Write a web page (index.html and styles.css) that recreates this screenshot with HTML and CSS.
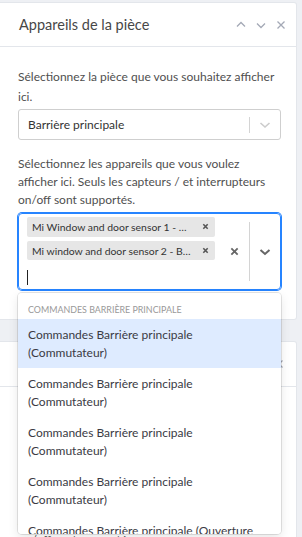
FILE: index.html
```html
<!DOCTYPE html>
<html lang="fr">
<head>
<meta charset="utf-8">
<title>Appareils de la pièce</title>
<link rel="stylesheet" href="styles.css">
</head>
<body>
<div class="page">
  <section class="card card-first">
    <header class="card-head">
      <h2 class="card-title">Appareils de la pièce</h2>
      <div class="tools">
        <svg class="tool" viewBox="0 0 10 10"><polyline points="1,6.5 5,2.5 9,6.5"/></svg>
        <svg class="tool" viewBox="0 0 10 10"><polyline points="1,3.5 5,7.5 9,3.5"/></svg>
        <svg class="tool" viewBox="0 0 10 10"><path d="M1.5 1.5 L8.5 8.5 M8.5 1.5 L1.5 8.5"/></svg>
      </div>
    </header>
    <div class="card-body">
      <p class="hint">Sélectionnez la pièce que vous souhaitez afficher ici.</p>
      <div class="select">
        <span class="select-value">Barrière principale</span>
        <span class="sep"></span>
        <span class="ind"><svg class="chev light" viewBox="0 0 12 8"><polyline points="1.5,2 6,6 10.5,2"/></svg></span>
      </div>
      <p class="hint hint-tight">Sélectionnez les appareils que vous voulez afficher ici. Seuls les capteurs / et interrupteurs on/off sont supportés.</p>
      <div class="multi">
        <div class="values">
          <div class="chip"><span class="chip-label">Mi Window and door sensor 1 - Barrière principale</span><span class="chip-x"><svg viewBox="0 0 8 8"><path d="M1.5 1.5 L6.5 6.5 M6.5 1.5 L1.5 6.5"/></svg></span></div>
          <div class="chip"><span class="chip-label">Mi window and door sensor 2 - Barrière principale</span><span class="chip-x"><svg viewBox="0 0 8 8"><path d="M1.5 1.5 L6.5 6.5 M6.5 1.5 L1.5 6.5"/></svg></span></div>
          <div class="input-row"><span class="caret"></span></div>
        </div>
        <div class="indicators">
          <span class="ind ind-clear"><svg class="clear" viewBox="0 0 10 10"><path d="M1.5 1.5 L8.5 8.5 M8.5 1.5 L1.5 8.5"/></svg></span>
          <span class="sep sep-tall"></span>
          <span class="ind"><svg class="chev dark" viewBox="0 0 12 8"><polyline points="1.5,2 6,6 10.5,2"/></svg></span>
        </div>
        <div class="menu">
          <div class="group-head">Commandes Barrière principale</div>
          <div class="option focused">Commandes Barrière principale (Commutateur)</div>
          <div class="option">Commandes Barrière principale (Commutateur)</div>
          <div class="option">Commandes Barrière principale (Commutateur)</div>
          <div class="option">Commandes Barrière principale (Commutateur)</div>
          <div class="option">Commandes Barrière principale (Ouverture partielle)</div>
        </div>
      </div>
    </div>
  </section>

  <section class="card">
    <header class="card-head card-head-2">
      <h2 class="card-title">Appareils de la pièce</h2>
      <div class="tools">
        <svg class="tool" viewBox="0 0 10 10"><polyline points="6.5,1.5 3,5 6.5,8.5"/></svg>
      </div>
    </header>
    <div class="card-body">
      <p class="hint">Sélectionnez la pièce que vous souhaitez afficher ici.</p>
      <div class="select">
        <span class="select-value">Entrée</span>
        <span class="sep"></span>
        <span class="ind"><svg class="chev light" viewBox="0 0 12 8"><polyline points="1.5,2 6,6 10.5,2"/></svg></span>
      </div>
      <p class="hint hint-tight">Sélectionnez les appareils que vous voulez afficher ici. Seuls les capteurs / et interrupteurs on/off sont supportés.</p>
    </div>
  </section>
</div>

<svg class="pointer" viewBox="0 0 13 20"><path d="M0.5 0.5 L0.5 16 L4 12.6 L6.6 18.6 L9 17.6 L6.5 11.8 L11.5 11.8 Z"/></svg>
</body>
</html>
```

FILE: styles.css
```css
* { box-sizing: border-box; }

body {
  margin: 0;
  background: #eef0f4;
  font-family: Lato, "Noto Sans", sans-serif;
  color: #555;
}

.page {
  padding: 2px 5px 0 0;
  display: flex;
  flex-direction: column;
  gap: 21px;
}

.card {
  background: #fff;
  border: 1px solid #e3e6eb;
  border-left: none;
  border-radius: 0 3px 3px 0;
}

.card-first {
  position: relative;
  z-index: 2;
}

.card-head {
  height: 44px;
  border-bottom: 1px solid #e3e6eb;
  display: flex;
  align-items: center;
  justify-content: space-between;
  padding: 0 10px 0 19px;
}

.card-head-2 {
  height: 45px;
  padding-right: 10px;
}

.card-title {
  margin: 0;
  font-size: 14.5px;
  font-weight: 400;
  color: #474747;
}

.tools {
  display: flex;
  gap: 10px;
}

.tool {
  width: 10px;
  height: 10px;
  fill: none;
  stroke: #a4a9b6;
  stroke-width: 1.3;
}

.card-body {
  padding: 20px 15px 29px 18px;
}

.hint {
  margin: 0 0 2px;
  font-size: 12px;
  line-height: 20px;
  color: #4f4f4f;
}

.hint-tight {
  margin: 15px 0 4px;
  line-height: 18px;
}

.select {
  height: 31px;
  border: 1px solid #cfcfcf;
  border-radius: 3px;
  display: flex;
  align-items: center;
  padding-left: 9px;
}

.select-value {
  flex: 1;
  font-size: 12px;
  color: #333;
}

.sep {
  width: 1px;
  height: 16px;
  background: #d4d4d4;
}

.sep-tall {
  height: 59px;
  align-self: center;
}

.ind {
  width: 30px;
  display: flex;
  align-items: center;
  justify-content: center;
}

.chev {
  width: 12px;
  height: 8px;
  fill: none;
  stroke-width: 1.6;
}

.chev.light { stroke: #cccccc; }
.chev.dark { stroke: #666; stroke-width: 2; }

.multi {
  position: relative;
  display: flex;
  height: 77px;
  border: 1px solid #2684ff;
  box-shadow: 0 0 0 1px #2684ff;
  border-radius: 4px;
}

.values {
  flex: 1;
  min-width: 0;
  padding: 1px 6px;
  display: flex;
  flex-direction: column;
  align-items: flex-start;
}

.chip {
  display: flex;
  align-items: center;
  max-width: 188px;
  height: 20px;
  margin: 2px 2px;
  background: #e6e6e6;
  border-radius: 2px;
}

.chip-label {
  min-width: 0;
  overflow: hidden;
  white-space: nowrap;
  text-overflow: ellipsis;
  font-size: 10.4px;
  color: #333;
  padding: 0 3px 0 5px;
}

.chip-x {
  flex: none;
  width: 20px;
  display: flex;
  align-items: center;
  justify-content: center;
}

.chip-x svg {
  width: 7px;
  height: 7px;
  fill: none;
  stroke: #555;
  stroke-width: 1.8;
}

.input-row {
  height: 22px;
  margin: 2px;
  display: flex;
  align-items: center;
}

.caret {
  width: 1px;
  height: 15px;
  background: #222;
  margin-top: 5px;
}

.indicators {
  display: flex;
  align-items: center;
}

.ind-clear {
  width: 29px;
}

.clear {
  width: 9px;
  height: 9px;
  fill: none;
  stroke: #666;
  stroke-width: 2;
}

.menu {
  position: absolute;
  z-index: 10;
  top: calc(100% + 4px);
  left: -1px;
  right: -1px;
  height: 241px;
  overflow-y: auto;
  background: #fff;
  border-radius: 4px;
  box-shadow: 0 0 0 1px rgba(0, 0, 0, 0.1), 0 4px 11px rgba(0, 0, 0, 0.1);
  padding: 4px 0;
}

.menu::-webkit-scrollbar { width: 4px; }
.menu::-webkit-scrollbar-track { background: transparent; }
.menu::-webkit-scrollbar-thumb { background: #cbd0d8; }

.group-head {
  padding: 6px 10px 2px;
  font-size: 8.9px;
  line-height: 14px;
  text-transform: uppercase;
  color: #999;
}

.option {
  padding: 7px 10px 6px;
  font-size: 12px;
  line-height: 18px;
  color: #3a3a44;
}

.option.focused { background: #deebff; }

.pointer {
  position: absolute;
  left: 5px;
  top: 67px;
  width: 13px;
  height: 20px;
  fill: #fff;
  stroke: #000;
  stroke-width: 1;
  stroke-linejoin: round;
}
```
